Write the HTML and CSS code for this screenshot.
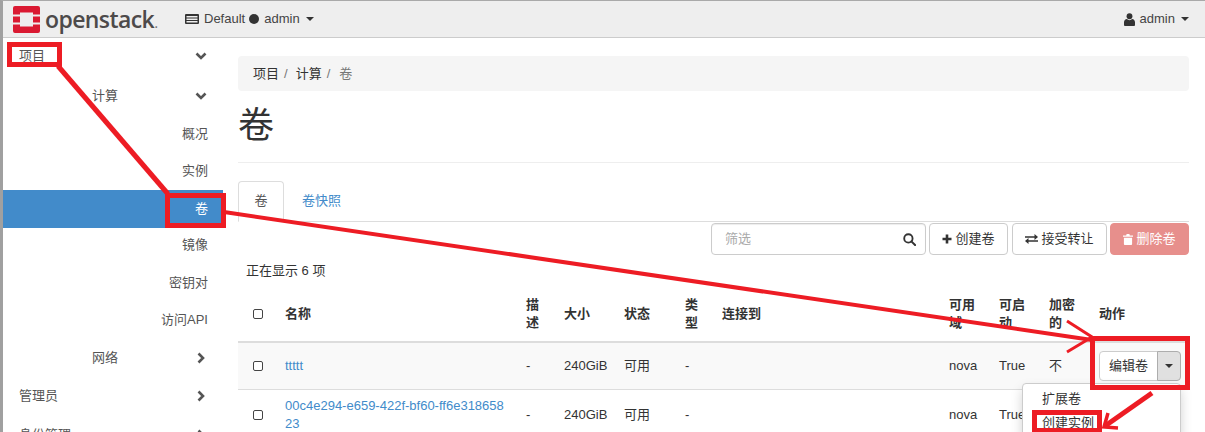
FILE: index.html
```html
<!DOCTYPE html>
<html lang="en">
<head>
    <meta charset="UTF-8">
    <meta name="viewport" content="width=device-width, initial-scale=1.0">
    <title>卷 - OpenStack</title>
    <link rel="stylesheet" href="styles.css">
</head>
<body>

    <div class="page">
        <header class="navbar">
            <a class="brand">
                <svg class="brand-mark" viewBox="0 0 27 27" width="27" height="27">
                    <path fill="#da1a32" d="M2 0h23a2 2 0 0 1 2 2v6.500h-7v-2H7v2H0V2a2 2 0 0 1 2-2zM0 10.500h7v6H0zM20 10.500h7v6h-7zM0 18.500h7v2h13v-2h7V25a2 2 0 0 1-2 2H2a2 2 0 0 1-2-2z"/>
                </svg>
                <span class="brand-name">openstack</span><span class="brand-dot">.</span>
            </a>
            <div class="project-menu">
                <svg class="nav-icon" viewBox="0 0 14 12" width="14" height="12">
                    <path fill="#333" fill-rule="evenodd" d="M1 1h12a1 1 0 0 1 1 1v8a1 1 0 0 1-1 1H1a1 1 0 0 1-1-1V2a1 1 0 0 1 1-1zm.5 2v1.500h11V3zm0 2.500V7h11V5.500zm0 2.500v1.500h11V8z"/>
                </svg>
                <span>Default</span>
                <span class="dot"></span>
                <span>admin</span>
                <span class="caret"></span>
            </div>
            <div class="user-menu">
                <svg class="nav-icon" viewBox="0 0 12 14" width="11" height="13">
                    <circle cx="6" cy="3.500" r="3.200" fill="#333"/>
                    <path fill="#333" d="M0 13v-3c0-2 1.500-3.500 3-3.500 1 .8 2 1.200 3 1.200s2-.4 3-1.200c1.500 0 3 1.500 3 3.500v3a1 1 0 0 1-1 1H1a1 1 0 0 1-1-1z"/>
                </svg>
                <span>admin</span>
                <span class="caret"></span>
            </div>
        </header>

        <div class="layout">
            <nav class="sidebar">
                <div class="side-row level-one top">
                    <span>项目</span>
                    <svg class="chevron" viewBox="0 0 12 8" width="12" height="8"><path d="M1.500 1.500 6 6l4.500-4.500"/></svg>
                </div>
                <div class="side-row level-two compute">
                    <span>计算</span>
                    <svg class="chevron" viewBox="0 0 12 8" width="12" height="8"><path d="M1.500 1.500 6 6l4.500-4.500"/></svg>
                </div>
                <div class="side-link">概况</div>
                <div class="side-link">实例</div>
                <div class="side-link active">卷</div>
                <div class="side-link">镜像</div>
                <div class="side-link">密钥对</div>
                <div class="side-link">访问API</div>
                <div class="side-row level-two">
                    <span>网络</span>
                    <svg class="chevron side" viewBox="0 0 8 12" width="8" height="12"><path d="M1.500 1.500 6 6l-4.500 4.500"/></svg>
                </div>
                <div class="side-row level-one">
                    <span>管理员</span>
                    <svg class="chevron side" viewBox="0 0 8 12" width="8" height="12"><path d="M1.500 1.500 6 6l-4.500 4.500"/></svg>
                </div>
                <div class="side-row level-one">
                    <span>身份管理</span>
                    <svg class="chevron side" viewBox="0 0 8 12" width="8" height="12"><path d="M1.500 1.500 6 6l-4.500 4.500"/></svg>
                </div>
            </nav>

            <main class="content">
                <ol class="breadcrumb">
                    <li>项目</li>
                    <li>计算</li>
                    <li class="current">卷</li>
                </ol>

                <h1 class="page-title">卷</h1>

                <ul class="tabs">
                    <li class="tab selected">卷</li>
                    <li class="tab">卷快照</li>
                </ul>

                <div class="toolbar">
                    <div class="filter">
                        <span class="filter-text">筛选</span>
                        <svg viewBox="0 0 14 14" width="13" height="13"><circle cx="5.800" cy="5.800" r="4.500" fill="none" stroke="#333" stroke-width="2"/><path d="m9 9 4 4" stroke="#333" stroke-width="2.200" stroke-linecap="round"/></svg>
                    </div>
                    <button class="btn"><svg viewBox="0 0 10 10" width="10" height="10"><path d="M5 .5v9M.5 5h9" stroke="#333" stroke-width="2.600"/></svg>创建卷</button>
                    <button class="btn accept"><svg viewBox="0 0 13 10" width="13" height="10"><path fill="#333" d="M0 2.200h9.500V0L13 3l-3.500 3V3.800H0zM13 6.200H3.500V4L0 7l3.500 3V7.800H13z"/></svg>接受转让</button>
                    <button class="btn danger"><svg viewBox="0 0 11 12" width="10" height="11"><path fill="#fff" d="M4 0h3l.5 1.500H11V3H0V1.500h3.500zM1 4h9v7a1 1 0 0 1-1 1H2a1 1 0 0 1-1-1z"/></svg>删除卷</button>
                </div>

                <p class="count">正在显示 6 项</p>

                <table class="volumes">
                    <colgroup>
                        <col class="c-check"><col class="c-name"><col class="c-desc"><col class="c-size"><col class="c-status">
                        <col class="c-type"><col class="c-attach"><col class="c-zone"><col class="c-boot"><col class="c-enc"><col class="c-action">
                    </colgroup>
                    <thead>
                        <tr>
                            <th><span class="check"></span></th>
                            <th>名称</th><th>描述</th><th>大小</th><th>状态</th><th>类型</th><th>连接到</th><th>可用域</th><th>可启动</th><th>加密的</th><th>动作</th>
                        </tr>
                    </thead>
                    <tbody>
                        <tr class="odd">
                            <td><span class="check"></span></td>
                            <td><a>ttttt</a></td>
                            <td>-</td><td>240GiB</td><td>可用</td><td>-</td><td></td><td>nova</td><td>True</td><td>不</td>
                            <td>
                                <div class="split">
                                    <button class="split-main">编辑卷</button>
                                    <button class="split-toggle"><span class="caret"></span></button>
                                </div>
                            </td>
                        </tr>
                        <tr>
                            <td><span class="check"></span></td>
                            <td><a>00c4e294-e659-422f-bf60-ff6e31865823</a></td>
                            <td>-</td><td>240GiB</td><td>可用</td><td>-</td><td></td><td>nova</td><td>True</td><td></td><td></td>
                        </tr>
                    </tbody>
                </table>
            </main>
        </div>

        <ul class="action-menu">
            <li>扩展卷</li>
            <li>创建实例</li>
        </ul>

        <!-- red markup drawn on top of the screenshot -->
        <svg class="markup" viewBox="0 0 1205 432" width="1205" height="432">
            <g fill="none" stroke="#ed1c24">
                <rect x="9.500" y="44.500" width="50" height="20" stroke-width="5"/>
                <rect x="167.500" y="195.500" width="56" height="30" stroke-width="5"/>
                <rect x="1092.500" y="338.500" width="95" height="49" stroke-width="5"/>
                <rect x="1034.500" y="412.500" width="65" height="18" stroke-width="5"/>
                <path d="M58 66 168 194" stroke-width="5"/>
                <path d="M224 212 1092 340" stroke-width="4"/>
                <path d="M1067 321 1092 337 1067 352" stroke-width="3"/>
                <path d="M1152 393 1105 426" stroke-width="5"/>
                <path d="M1108 413 1104 427 1118 428" stroke-width="3.500"/>
            </g>
        </svg>
    </div>

</body>
</html>
```

FILE: styles.css
```css
* {
    box-sizing: border-box;
}

html, body {
    margin: 0;
    height: 432px;
    overflow: hidden;
}

body {
    font-family: 'Liberation Sans', 'Noto Sans CJK SC', sans-serif;
    font-size: 13px;
    line-height: 18px;
    color: #333;
    background-color: #fff;
}

.page {
    position: relative;
    width: 1205px;
    height: 432px;
    overflow: hidden;
    border-top: 1px solid #a9a9a9;
    border-left: 3px solid #a0a0a0;
}

.navbar {
    display: flex;
    align-items: center;
    height: 37px;
    padding: 0 16px 0 10px;
    background-color: #eee;
    border-bottom: 1px solid #ccc;
}

.brand {
    display: flex;
    align-items: center;
    width: 172px;
}

.brand-mark {
    margin-right: 5px;
}

.brand-name {
    font-family: 'Open Sans', sans-serif;
    font-size: 23px;
    font-weight: 600;
    line-height: 30px;
    letter-spacing: -0.6px;
    color: #4d4a4a;
}

.brand-dot {
    font-size: 16px;
    color: #777;
    margin-top: 8px;
}

.project-menu, .user-menu {
    display: flex;
    align-items: center;
    gap: 4px;
    color: #444;
}

.user-menu {
    margin-left: auto;
}

.nav-icon {
    margin-right: 1px;
}

.dot {
    width: 10px;
    height: 10px;
    margin-right: 1px;
    border-radius: 50%;
    background-color: #333;
}

.caret {
    display: inline-block;
    margin-left: 2px;
    border-top: 4px solid #333;
    border-left: 4px solid transparent;
    border-right: 4px solid transparent;
}

.layout {
    display: flex;
}

.sidebar {
    width: 220px;
    flex-shrink: 0;
    color: #555;
}

.side-row {
    display: flex;
    align-items: center;
    justify-content: space-between;
    height: 38.500px;
    padding-right: 16px;
}

.side-row.top {
    height: 35px;
}

.side-row.compute {
    height: 41.500px;
    padding-top: 4px;
}

.level-one {
    padding-left: 16px;
}

.level-two {
    padding-left: 89px;
}

.chevron {
    fill: none;
    stroke: #555;
    stroke-width: 2.600;
}

.chevron.side {
    margin-right: 2px;
}

.side-link {
    height: 37.300px;
    line-height: 37.300px;
    padding-right: 15px;
    text-align: right;
}

.side-link.active {
    height: 38px;
    margin-top: 0.600px;
    margin-bottom: -1.300px;
    line-height: 38px;
    background-color: #428bca;
    color: #fff;
}

.content {
    width: 951px;
    margin-left: 15px;
    padding-top: 18px;
}

.breadcrumb {
    display: flex;
    height: 35px;
    margin: 0;
    padding: 0 15px;
    align-items: center;
    list-style: none;
    background-color: #f5f5f5;
    border-radius: 4px;
}

.breadcrumb li:not(.current)::after {
    content: "/";
    padding: 0 8px 0 5px;
    color: #777;
}

.breadcrumb .current {
    margin-left: 1px;
    color: #777;
}

.page-title {
    margin: 15px 0 0;
    padding-bottom: 16px;
    font-size: 36px;
    line-height: 40px;
    font-weight: 400;
    border-bottom: 1px solid #eee;
}

.tabs {
    display: flex;
    height: 41px;
    margin: 18px 0 0;
    padding: 0;
    list-style: none;
    border-bottom: 1px solid #ddd;
}

.tab {
    height: 41px;
    padding: 10px 15px;
    margin-right: 2px;
    color: #428bca;
    border: 1px solid transparent;
}

.tab.selected {
    width: 46px;
    padding-left: 15.500px;
    color: #555;
    background-color: #fff;
    border-color: #ddd #ddd #fff;
    border-radius: 4px 4px 0 0;
}

.toolbar {
    display: flex;
    justify-content: flex-end;
    gap: 3px;
    margin-top: 1px;
}

.filter {
    display: flex;
    align-items: center;
    justify-content: space-between;
    width: 215px;
    height: 32px;
    padding: 0 9px 0 13px;
    border: 1px solid #ccc;
    border-radius: 4px;
    box-shadow: inset 0 1px 1px rgba(0, 0, 0, 0.075);
}

.filter-text {
    color: #aaa;
}

.btn {
    display: flex;
    align-items: center;
    justify-content: center;
    gap: 3px;
    width: 79px;
    height: 32px;
    padding: 0;
    font: inherit;
    color: #333;
    background-color: #fff;
    border: 1px solid #ccc;
    border-radius: 4px;
}

.btn.accept {
    width: 95px;
    margin-left: 1px;
}

.btn.danger {
    color: #fff;
    background-color: #e78f8c;
    border-color: #e78f8c;
}

.count {
    margin: 7px 0 0;
    padding-left: 8px;
    height: 29px;
    line-height: 18px;
}

.volumes {
    width: 951px;
    table-layout: fixed;
    border-collapse: collapse;
}

.c-check { width: 39px; }
.c-name { width: 241px; }
.c-desc { width: 38px; }
.c-size { width: 60px; }
.c-status { width: 61px; }
.c-type { width: 37px; }
.c-attach { width: 227px; }
.c-zone { width: 50px; }
.c-boot { width: 50px; }
.c-enc { width: 50px; }
.c-action { width: 98px; }

.volumes th {
    height: 51px;
    padding: 4px 8px 8px;
    text-align: left;
    font-weight: 700;
    vertical-align: middle;
    border-bottom: 2px solid #ddd;
}

.volumes td {
    height: 47px;
    padding: 7px 8px;
    vertical-align: middle;
    border-bottom: 1px solid #ddd;
}

.volumes th:first-child, .volumes td:first-child {
    padding-left: 15px;
    padding-right: 0;
}

.volumes a {
    color: #428bca;
    word-break: break-all;
}

.odd td {
    background-color: #f9f9f9;
}

.check {
    display: block;
    width: 10px;
    height: 10px;
    background-color: #fff;
    border: 1px solid #444;
    border-radius: 2px;
}

.split {
    display: flex;
    width: 82px;
    height: 30px;
}

.split button {
    font: inherit;
    color: #333;
    border: 1px solid #ccc;
}

.split-main {
    width: 59px;
    padding: 0;
    background-color: #fff;
    border-radius: 4px 0 0 4px;
}

.split .split-toggle {
    width: 24px;
    margin-left: -1px;
    padding: 0;
    background-color: #e0e0e0;
    border-color: #adadad;
    border-radius: 0 4px 4px 0;
}

.split-toggle .caret {
    margin: 0;
    vertical-align: middle;
}

.action-menu {
    position: absolute;
    top: 382px;
    left: 1019px;
    width: 159px;
    margin: 0;
    padding: 3px 0;
    list-style: none;
    background-color: #fff;
    border: 1px solid #ccc;
    border-radius: 4px;
    box-shadow: 0 6px 12px rgba(0, 0, 0, 0.175);
}

.action-menu li {
    padding: 3px 19px;
    height: 24px;
    line-height: 18px;
    color: #333;
}

.markup {
    position: absolute;
    top: -1px;
    left: -3px;
}
```
